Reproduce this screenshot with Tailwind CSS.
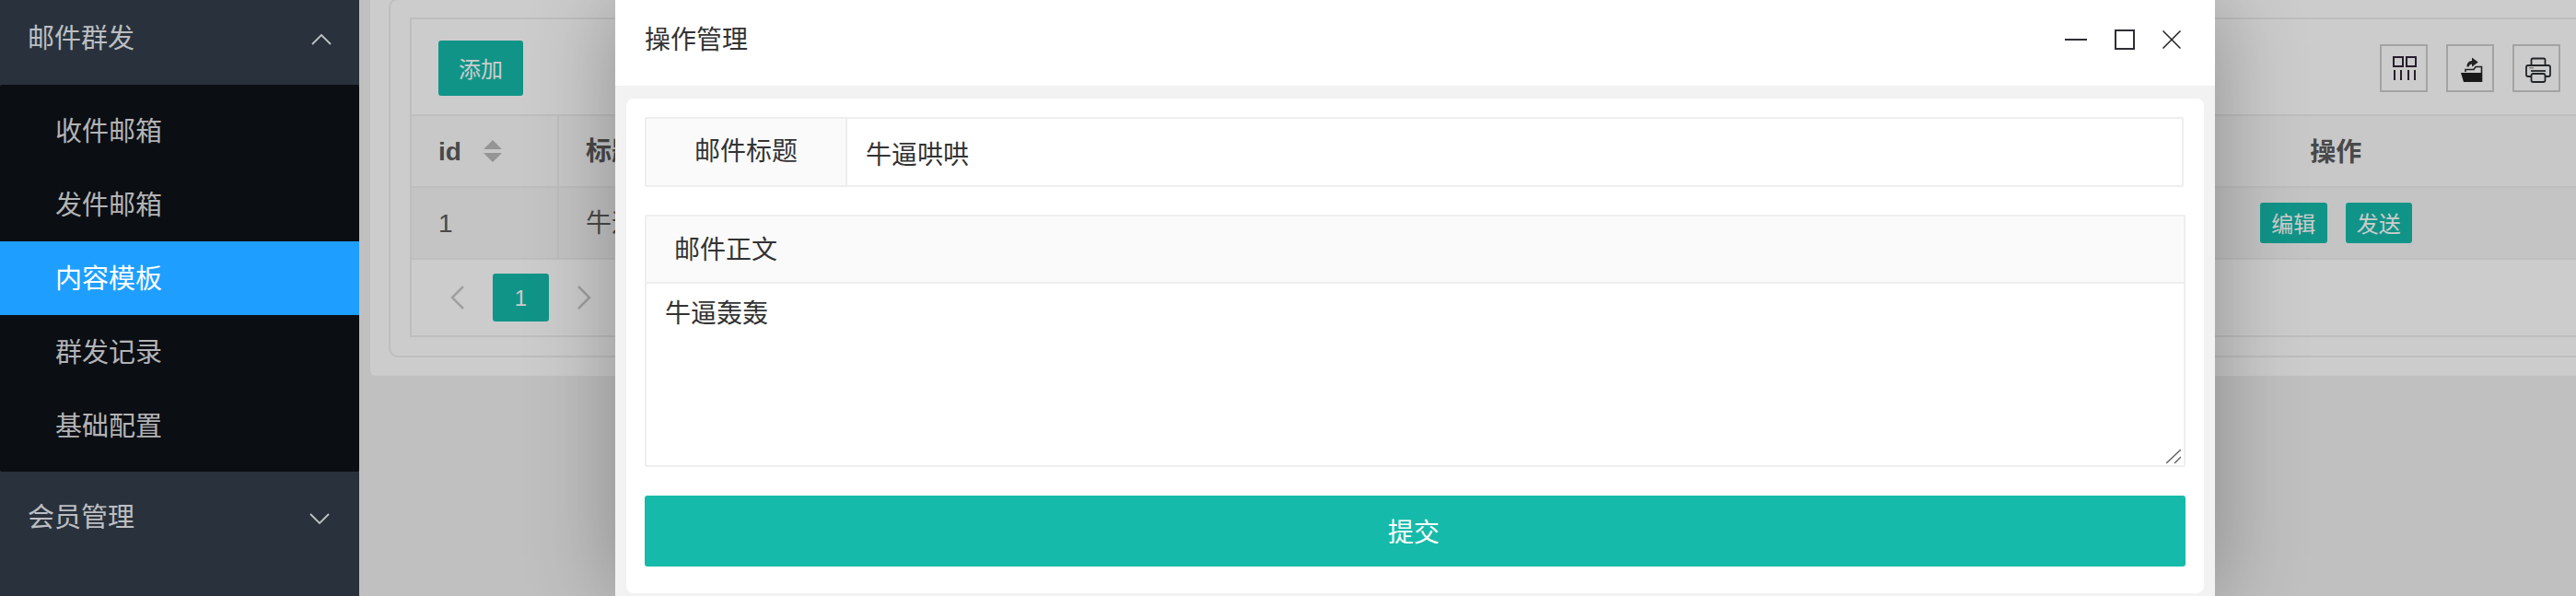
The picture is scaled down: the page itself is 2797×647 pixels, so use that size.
<!DOCTYPE html>
<html lang="zh">
<head>
<meta charset="utf-8">
<script src="https://cdn.jsdelivr.net/npm/@tailwindcss/browser@4"></script>
<title>操作管理</title>
</head>
<body class="relative h-screen w-screen overflow-hidden bg-[#f0f0f0] font-['Liberation_Sans','Noto_Sans_CJK_SC',sans-serif]">
<div class="flex h-full">
  <!-- sidebar -->
  <aside class="relative z-20 -mt-2 h-[700px] w-[390px] shrink-0 bg-[#29323c] text-[29px] text-white/70">
    <div class="flex h-[100px] items-center justify-between pl-[30px] pr-[30px] pt-[2px]">
      <span>邮件群发</span>
      <svg class="-mt-[2px] h-[13px] w-[22px]" viewBox="0 0 22 13" fill="none" stroke="currentColor" stroke-width="1.8"><path d="M1 12 11 2l10 10"/></svg>
    </div>
    <nav class="rounded-[2px] bg-[#0b0e13] py-[10px]">
      <div class="flex h-[80px] items-center pl-[60px] pt-[3px]">收件邮箱</div>
      <div class="flex h-[80px] items-center pl-[60px] pt-[3px]">发件邮箱</div>
      <div class="flex h-[80px] items-center bg-[#1e9fff] pl-[60px] pt-[3px] text-white">内容模板</div>
      <div class="flex h-[80px] items-center pl-[60px] pt-[3px]">群发记录</div>
      <div class="flex h-[80px] items-center pl-[60px] pt-[3px]">基础配置</div>
    </nav>
    <div class="flex h-[100px] items-center justify-between pl-[30px] pr-[32px] pt-[2px]">
      <span>会员管理</span>
      <svg class="h-[13px] w-[22px]" viewBox="0 0 22 13" fill="none" stroke="currentColor" stroke-width="1.8"><path d="M1 1l10 10L21 1"/></svg>
    </div>
  </aside>

  <!-- page content -->
  <main class="min-w-0 flex-1 pl-[12px]">
    <div class="-mt-[22px] h-[430px] w-[2600px] rounded-[6px] bg-white pl-[20px] pt-[20px]">
      <div class="h-[390px] w-[2500px] rounded-[10px] border-2 border-[#eee] pl-[21px] pt-[19px]">
        <div class="w-[2385px] border-2 border-[#eee] text-[28px] text-[#5c5c5c]">
          <div class="flex h-[103px] items-center justify-between pl-[29px] pr-[48px] pt-[3px]">
            <button class="flex h-[60px] w-[92px] items-center justify-center rounded-[3px] bg-[#16baaa] pt-[4px] text-[24px] text-white">添加</button>
            <div class="flex gap-[20px]">
              <div class="flex h-[52px] w-[52px] items-center justify-center border-2 border-[#ccc]">
                <svg class="ml-[2px] h-[28px] w-[28px]" viewBox="0 0 28 28" fill="none" stroke="#33253a" stroke-width="2"><path d="M2 2h10v10H2zM16 2h10v10H16zM3 16v11M10 16v11M18 16v11M25 16v11"/></svg>
              </div>
              <div class="flex h-[52px] w-[52px] items-center justify-center border-2 border-[#ccc]">
                <svg class="ml-[4px] mt-[4px] h-[40px] w-[40px] shrink-0" viewBox="0 0 40 40">
                  <path d="M20 6.500 26.800 11.500 20 16.500V13.500Q17.500 13.200 16.500 16.500H14.500Q14.500 10 20 10z" fill="#2a2a2a"/>
                  <path d="M13 22V19.500H22L24 16.500H30.500V33" fill="none" stroke="#2a2a2a" stroke-width="1.600"/>
                  <path d="M8 23H31V33H11z" fill="#1f1f1f"/>
                </svg>
              </div>
              <div class="flex h-[52px] w-[52px] items-center justify-center border-2 border-[#ccc]">
                <svg class="ml-[4px] mt-[4px] h-[40px] w-[40px] shrink-0" viewBox="0 0 40 40" fill="none" stroke="#2b2f33" stroke-width="1.800">
                  <path d="M12.500 15V9Q12.500 7.500 14 7.500H26Q27.500 7.500 27.500 9V15"/>
                  <path d="M12 27H9Q7 27 7 25V17Q7 15 9 15H31Q33 15 33 17V25Q33 27 31 27H28"/>
                  <rect x="12.500" y="24" width="15" height="9" rx="2"/>
                  <path d="M12 21H28"/>
                  <path d="M10 17.800H15" stroke-width="1" stroke="#777"/>
                </svg>
              </div>
            </div>
          </div>
          <div class="flex h-[78px] items-center border-t-2 border-[#eee] bg-[#fafafa] font-bold">
            <div class="flex h-full w-[160px] items-center gap-[24px] border-r-2 border-[#eee] pl-[29px]">
              <span class="pt-[2px]">id</span>
              <svg class="h-[24px] w-[20px]" viewBox="0 0 20 24" fill="#bbb"><path d="M10 0 20 10H0zM0 14h20L10 24z"/></svg>
            </div>
            <div class="w-[1639px] pl-[29px] pt-[2px]">标题</div>
            <div class="w-[584px] pt-[4px] text-center">操作</div>
          </div>
          <div class="flex h-[78px] items-center border-t-2 border-[#eee] bg-[#f5f5f5]">
            <div class="flex h-full w-[160px] items-center border-r-2 border-[#eee] pl-[29px] pt-[2px]">1</div>
            <div class="w-[1639px] pl-[29px] pt-[2px]">牛逼哄哄</div>
            <div class="flex w-[584px] justify-center gap-[20px] text-[24px] text-white">
              <button class="flex h-[44px] w-[73px] items-center justify-center rounded-[3px] bg-[#16baaa] pt-[4px]">编辑</button>
              <button class="flex h-[44px] w-[72px] items-center justify-center rounded-[3px] bg-[#16baaa] pt-[4px]">发送</button>
            </div>
          </div>
          <div class="flex h-[84px] items-center border-t-2 border-[#eee] pl-[42px]">
            <svg class="h-[26px] w-[16px]" viewBox="0 0 16 26" fill="none" stroke="#c8c8c8" stroke-width="2.500"><path d="M14 1 2 13l12 12"/></svg>
            <div class="ml-[30px] flex h-[52px] w-[61px] items-center justify-center rounded-[3px] bg-[#16baaa] pt-[2px] text-[24px] text-white">1</div>
            <svg class="ml-[30px] h-[26px] w-[16px]" viewBox="0 0 16 26" fill="none" stroke="#c8c8c8" stroke-width="2.500"><path d="M2 1l12 12L2 25"/></svg>
          </div>
        </div>
      </div>
    </div>
  </main>
</div>

<!-- dimming layer -->
<div class="absolute inset-0 z-10 bg-black/20"></div>

<!-- dialog -->
<section class="absolute left-[668px] top-0 z-30 h-full w-[1737px] bg-white text-[28px] text-[#333] shadow-[1px_1px_90px_rgba(0,0,0,0.3)]">
  <header class="flex h-[93px] items-center justify-between pl-[32px] pr-[37px]">
    <h2 class="-mt-[6px]">操作管理</h2>
    <div class="-mt-[8px] flex items-center gap-[30px]">
      <span class="block h-[2px] w-[24px] bg-[#2e2e36]"></span>
      <span class="block h-[22px] w-[22px] border-2 border-[#2e2e36]"></span>
      <svg class="h-[20px] w-[20px]" viewBox="0 0 20 20" fill="none" stroke="#222" stroke-width="1.500"><path d="M0.500 0.500l19 19M19.500 0.500l-19 19"/></svg>
    </div>
  </header>
  <div class="h-[600px] bg-[#f2f2f2] px-[12px] pt-[14px]">
    <div class="h-[537px] rounded-[8px] bg-white px-[20px] pt-[20px]">
      <div class="flex h-[76px] w-[1671px] rounded-[2px] border-2 border-[#eee]">
        <label class="flex w-[218px] items-center justify-center border-r-2 border-[#eee] bg-[#fafafa]">邮件标题</label>
        <input class="min-w-0 flex-1 bg-white pl-[20px] pt-[8px] text-[#333] outline-none" value="牛逼哄哄">
      </div>
      <div class="relative mt-[30px] w-[1673px] rounded-[2px] border-2 border-[#eee]">
        <div class="flex h-[73px] items-center border-b-2 border-[#eee] bg-[#fafafa] pl-[30px] pt-[2px]">邮件正文</div>
        <textarea class="block h-[197px] w-full resize-none px-[20px] pb-[11px] pt-[13px] leading-[40px] text-[#333] outline-none">牛逼轰轰</textarea>
        <svg class="absolute bottom-[2px] right-[3px] h-[15px] w-[16px]" viewBox="0 0 16 15" fill="none" stroke="#666" stroke-width="1.500"><path d="M0 15 16 0M9 15l7-7"/></svg>
      </div>
      <button class="mt-[31px] flex h-[77px] w-[1673px] items-center justify-center rounded-[3px] bg-[#16baaa] pr-[3px] pt-[5px] text-white">提交</button>
    </div>
  </div>
</section>
</body>
</html>
